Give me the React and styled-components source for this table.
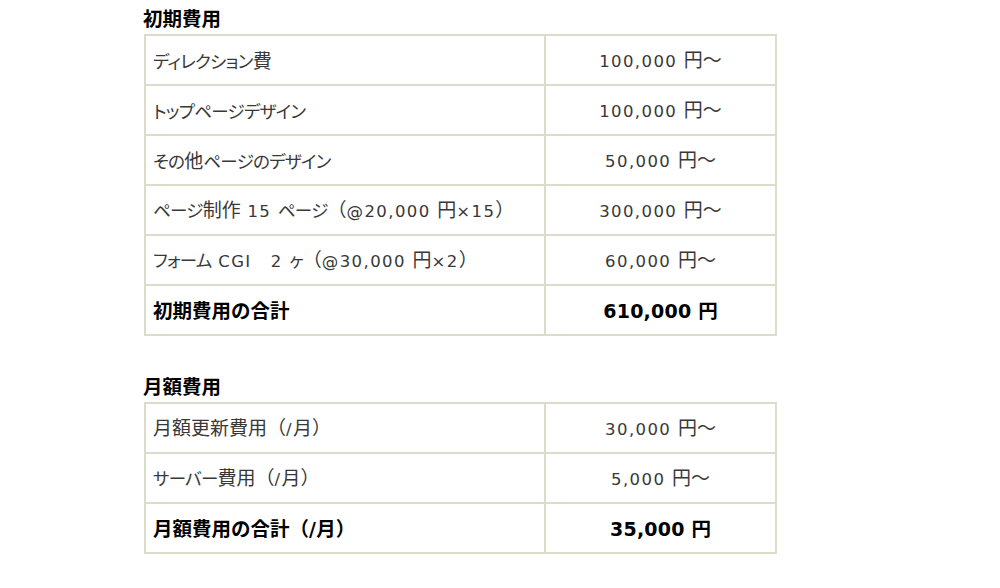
import React from "react";
import styled, { createGlobalStyle } from "styled-components";

const Global = createGlobalStyle`
  html, body { margin: 0; padding: 0; background: #fff; }
  body { font-family: "Noto Sans CJK JP", "DejaVu Sans", sans-serif; }
`;

const Page = styled.div`
  width: 1000px;
  height: 588px;
  box-sizing: border-box;
  padding: 6px 0 0 143px;
  display: flex;
  flex-direction: column;
`;

const Section = styled.section`
  display: flex;
  flex-direction: column;
  margin-bottom: ${(p) => p.$gap || 0}px;
`;

const Heading = styled.h3`
  margin: 0 0 4px 0;
  font-family: "Noto Sans CJK JP", sans-serif;
  font-size: 19.5px;
  line-height: 24px;
  font-weight: bold;
  color: #000;
`;

const Table = styled.table`
  width: 633px;
  margin-left: 1px;
  border-collapse: collapse;
  border: 2px solid #dcdccb;
  table-layout: fixed;
`;

const Row = styled.tr`
  height: 50px;
`;

const Cell = styled.td`
  border: 2px solid #dcdccb;
  padding: ${(p) => (p.$price ? "0" : "0 0 0 7px")};
  width: ${(p) => (p.$price ? "auto" : "391px")};
  text-align: ${(p) => (p.$price ? "center" : "left")};
  font-family: "Noto Sans CJK JP", sans-serif;
  font-size: ${(p) => (p.$total ? "19.5px" : "19px")};
  line-height: 24px;
  font-weight: ${(p) => (p.$total ? "bold" : "normal")};
  color: ${(p) => (p.$total ? "#000" : "#383838")};
  white-space: nowrap;
  vertical-align: middle;
`;

const Lat = styled.span`
  font-family: "DejaVu Sans", sans-serif;
  font-size: ${(p) => (p.$bold ? "19px" : "16.5px")};
  letter-spacing: ${(p) => (p.$bold ? "0.2px" : "1.4px")};
`;

const Kana = styled.span`
  font-size: ${(p) => (p.$bold ? "19.5px" : "17.5px")};
  font-feature-settings: ${(p) => (p.$bold ? "normal" : '"palt"')};
  letter-spacing: ${(p) => (p.$bold ? "0px" : "-0.7px")};
`;

const LATIN = /^[A-Za-z0-9@,.×\/ ]+$/;
const KANA = /^[\u3040-\u30FF]+$/;

function Mixed({ text, bold }) {
  const parts = text
    .split(/([A-Za-z0-9@,.×\/ ]+|[\u3040-\u30FF]+)/)
    .filter(Boolean);
  return parts.map((part, i) => {
    if (LATIN.test(part))
      return (
        <Lat key={i} $bold={bold}>
          {part}
        </Lat>
      );
    if (KANA.test(part))
      return (
        <Kana key={i} $bold={bold}>
          {part}
        </Kana>
      );
    return <React.Fragment key={i}>{part}</React.Fragment>;
  });
}

const initial = [
  { label: "ディレクション費", price: "100,000 円〜" },
  { label: "トップページデザイン", price: "100,000 円〜" },
  { label: "その他ページのデザイン", price: "50,000 円〜" },
  { label: "ページ制作 15 ページ（@20,000 円×15）", price: "300,000 円〜" },
  { label: "フォーム CGI　2 ヶ（@30,000 円×2）", price: "60,000 円〜" },
];

const monthly = [
  { label: "月額更新費用（/月）", price: "30,000 円〜" },
  { label: "サーバー費用（/月）", price: "5,000 円〜" },
];

function CostTable({ rows, totalLabel, totalPrice }) {
  return (
    <Table>
      <tbody>
        {rows.map((r) => (
          <Row key={r.label}>
            <Cell>
              <Mixed text={r.label} />
            </Cell>
            <Cell $price>
              <Mixed text={r.price} />
            </Cell>
          </Row>
        ))}
        <Row>
          <Cell $total>
            <Mixed text={totalLabel} bold />
          </Cell>
          <Cell $total $price>
            <Mixed text={totalPrice} bold />
          </Cell>
        </Row>
      </tbody>
    </Table>
  );
}

export default function App() {
  return (
    <>
      <Global />
      <Page>
        <Section $gap={38}>
          <Heading>初期費用</Heading>
          <CostTable rows={initial} totalLabel="初期費用の合計" totalPrice="610,000 円" />
        </Section>
        <Section>
          <Heading>月額費用</Heading>
          <CostTable rows={monthly} totalLabel="月額費用の合計（/月）" totalPrice="35,000 円" />
        </Section>
      </Page>
    </>
  );
}
